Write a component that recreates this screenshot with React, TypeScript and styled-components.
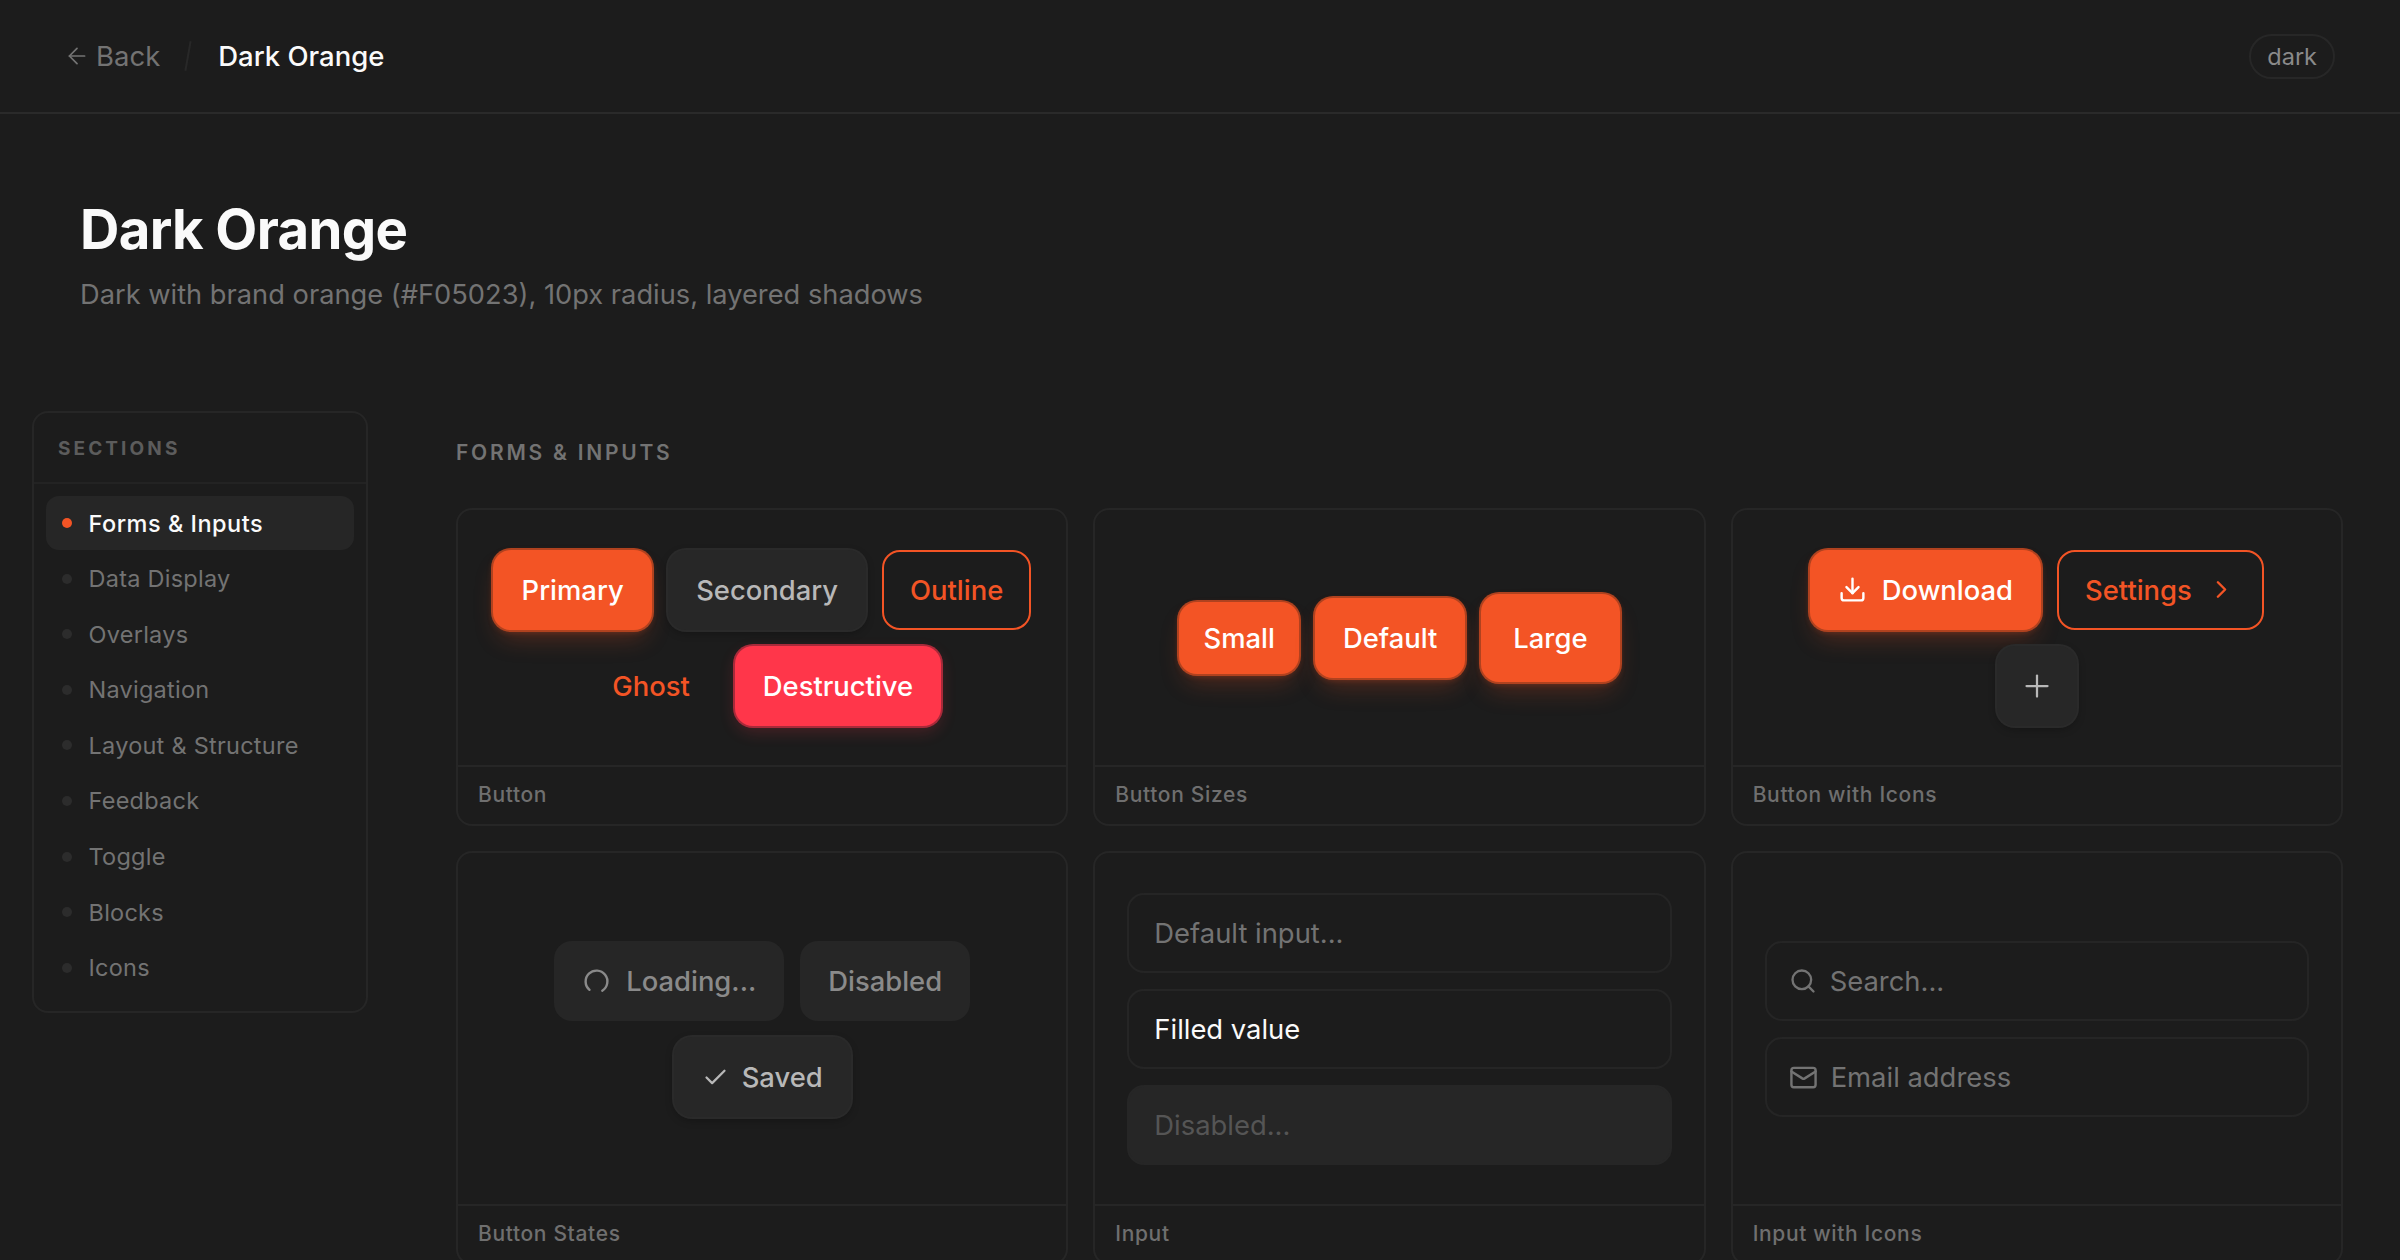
import styled, { createGlobalStyle, css } from "styled-components";
import { ArrowLeft, Check, ChevronRight, Download, LoaderCircle, Mail, Plus, Search } from "lucide-react";

const orange = "#f35425";
const red = "#ff364a";

const GlobalStyle = createGlobalStyle`
  html, body {
    margin: 0;
    height: 100%;
    overflow: hidden;
    background: #1c1c1c;
    color: #fff;
    font-family: Inter, "Liberation Sans", sans-serif;
  }
  * { box-sizing: border-box; }
`;

const TopBar = styled.header`
  display: flex;
  align-items: center;
  justify-content: space-between;
  height: 114px;
  padding: 0 65px 0 64px;
  border-bottom: 2px solid #2a2a2a;
`;

const Crumbs = styled.div`
  display: flex;
  align-items: center;
`;

const BackLink = styled.a`
  display: flex;
  align-items: center;
  gap: 6px;
  font-size: 27.5px;
  color: #737373;
`;

const Slash = styled.span`
  width: 2px;
  height: 30px;
  margin: 0 29px 0 27px;
  background: #282828;
  transform: rotate(10deg);
`;

const CrumbTitle = styled.span`
  font-size: 27.5px;
  font-weight: 500;
  color: #fafafa;
`;

const ThemePill = styled.span`
  display: flex;
  align-items: center;
  height: 45px;
  padding: 0 16px;
  border: 2px solid #272727;
  border-radius: 23px;
  font-size: 23.5px;
  color: #8a8a8a;
`;

const Hero = styled.section`
  padding: 84px 80px 0;
`;

const Title = styled.h1`
  margin: 0;
  font-size: 54.5px;
  line-height: 62px;
  font-weight: 700;
  letter-spacing: -0.012em;
  color: #fafafa;
`;

const Subtitle = styled.p`
  margin: 16px 0 0;
  font-size: 27.25px;
  line-height: 38px;
  color: #737373;
`;

const Columns = styled.div`
  display: flex;
  align-items: flex-start;
  gap: 88px;
  padding: 97px 57px 0 32px;
`;

const Sidebar = styled.nav`
  flex: 0 0 336px;
  border: 2px solid #262626;
  border-radius: 16px;
`;

const SidebarHead = styled.div`
  height: 71px;
  padding: 2px 24px 0;
  display: flex;
  align-items: center;
  border-bottom: 2px solid #232323;
  font-size: 19px;
  font-weight: 700;
  letter-spacing: 3.1px;
  color: #5c5c5c;
`;

const SidebarList = styled.ul`
  display: flex;
  flex-direction: column;
  gap: 1.6px;
  margin: 0;
  padding: 12px 12px 16px;
  list-style: none;
`;

const SidebarItem = styled.li<{ $active?: boolean }>`
  display: flex;
  align-items: center;
  gap: 16.5px;
  height: 54px;
  padding: 0 16px;
  border-radius: 13px;
  font-size: 23.5px;
  letter-spacing: ${(p) => (p.$active ? 0.5 : 0.25)}px;
  font-weight: ${(p) => (p.$active ? 500 : 400)};
  color: ${(p) => (p.$active ? "#fafafa" : "#737373")};
  background: ${(p) => (p.$active ? "#262626" : "transparent")};
`;

const Dot = styled.span<{ $active?: boolean }>`
  width: 10px;
  height: 10px;
  border-radius: 50%;
  background: ${(p) => (p.$active ? orange : "#2c2c2c")};
`;

const Main = styled.main`
  flex: 1;
  min-width: 0;
`;

const SectionTitle = styled.h2`
  margin: 0 0 40px;
  padding-top: 26.5px;
  font-size: 21px;
  line-height: 30px;
  font-weight: 600;
  letter-spacing: 2.75px;
  color: #737373;
`;

const Grid = styled.div`
  display: grid;
  grid-template-columns: repeat(3, 1fr);
  gap: 25.5px 25px;
`;

const Card = styled.article`
  display: flex;
  flex-direction: column;
  border: 2px solid #262626;
  border-radius: 16px;
`;

const CardBody = styled.div`
  flex: 1;
  display: flex;
  flex-wrap: wrap;
  align-items: center;
  align-content: center;
  justify-content: center;
  gap: 16px;
  padding: 40px 32px 39px;
`;

const Stack = styled.div`
  width: 100%;
  display: flex;
  flex-direction: column;
  gap: 16px;
`;

const CardFoot = styled.div`
  height: 59px;
  padding: 0 20px 2px;
  display: flex;
  align-items: center;
  border-top: 2px solid #262626;
  font-size: 21px;
  letter-spacing: 0.65px;
  font-weight: 500;
  color: #6f6f6f;
`;

type Variant = "primary" | "secondary" | "outline" | "ghost" | "danger" | "muted";

const variants: Record<Variant, ReturnType<typeof css>> = {
  primary: css`
    background: ${orange};
    color: #fff;
    box-shadow: 0 0 0 2px #b0421f, 0 14px 24px -6px rgba(240, 80, 35, 0.26), 0 2px 6px rgba(240, 80, 35, 0.3);
  `,
  secondary: css`
    background: #272727;
    color: #b8b8b8;
    box-shadow: 0 0 0 2px #2a2a2a, 0 3px 8px rgba(0, 0, 0, 0.3);
  `,
  outline: css`
    background: transparent;
    color: ${orange};
    border: 2px solid ${orange};
  `,
  ghost: css`
    background: transparent;
    color: ${orange};
  `,
  danger: css`
    background: ${red};
    color: #fff;
    box-shadow: 0 0 0 2px #a82a3a, 0 6px 16px rgba(255, 54, 74, 0.2);
  `,
  muted: css`
    background: #262626;
    color: #8a8a8a;
  `,
};

const Button = styled.button<{ $variant?: Variant; $height?: number; $pad?: number; $gap?: number }>`
  display: inline-flex;
  align-items: center;
  justify-content: center;
  gap: ${(p) => p.$gap ?? 15}px;
  height: ${(p) => p.$height ?? 80}px;
  padding: 0 ${(p) => p.$pad ?? 28}px;
  border: 0;
  border-radius: 18px;
  font-family: inherit;
  font-size: 27.4px;
  font-weight: 500;
  ${(p) => variants[p.$variant ?? "primary"]}
`;

const SquareButton = styled(Button)`
  width: 80px;
  padding: 0;
`;

const Spinner = styled(LoaderCircle)`
  transform: rotate(130deg);
`;

const TextField = styled.input<{ $disabled?: boolean }>`
  display: block;
  width: 100%;
  height: 80px;
  padding: 0 25px;
  border: 2px solid ${(p) => (p.$disabled ? "#262626" : "#252525")};
  border-radius: 17px;
  outline: 0;
  background: ${(p) => (p.$disabled ? "#262626" : "transparent")};
  font-family: inherit;
  font-size: 27.4px;
  color: #fafafa;
  &::placeholder {
    color: ${(p) => (p.$disabled ? "#555" : "#737373")};
    opacity: 1;
  }
`;

const IconField = styled.label`
  display: flex;
  align-items: center;
  gap: 13px;
  height: 80px;
  padding: 0 22px;
  border: 2px solid #252525;
  border-radius: 17px;
  color: #737373;
`;

const BareInput = styled.input`
  flex: 1;
  min-width: 0;
  border: 0;
  outline: 0;
  padding: 0;
  background: transparent;
  font-family: inherit;
  font-size: 27.4px;
  color: #fafafa;
  &::placeholder {
    color: #737373;
    opacity: 1;
  }
`;

const sections = ["Forms & Inputs", "Data Display", "Overlays", "Navigation", "Layout & Structure", "Feedback", "Toggle", "Blocks", "Icons"];

export default function App() {
  return (
    <>
      <GlobalStyle />
      <TopBar>
        <Crumbs>
          <BackLink>
            <ArrowLeft size={26} strokeWidth={1.6} />
            Back
          </BackLink>
          <Slash />
          <CrumbTitle>Dark Orange</CrumbTitle>
        </Crumbs>
        <ThemePill>dark</ThemePill>
      </TopBar>
      <Hero>
        <Title>Dark Orange</Title>
        <Subtitle>Dark with brand orange (#F05023), 10px radius, layered shadows</Subtitle>
      </Hero>
      <Columns>
        <Sidebar>
          <SidebarHead>SECTIONS</SidebarHead>
          <SidebarList>
            {sections.map((name, i) => (
              <SidebarItem key={name} $active={i === 0}>
                <Dot $active={i === 0} />
                {name}
              </SidebarItem>
            ))}
          </SidebarList>
        </Sidebar>
        <Main>
          <SectionTitle>FORMS &amp; INPUTS</SectionTitle>
          <Grid>
            <Card>
              <CardBody>
                <Button $pad={28.5}>Primary</Button>
                <Button $variant="secondary">Secondary</Button>
                <Button $variant="outline" $pad={26}>Outline</Button>
                <Button $variant="ghost" $pad={29}>Ghost</Button>
                <Button $variant="danger">Destructive</Button>
              </CardBody>
              <CardFoot>Button</CardFoot>
            </Card>
            <Card>
              <CardBody>
                <Button $height={72} $pad={24}>Small</Button>
                <Button>Default</Button>
                <Button $height={88} $pad={32}>Large</Button>
              </CardBody>
              <CardFoot>Button Sizes</CardFoot>
            </Card>
            <Card>
              <CardBody>
                <Button>
                  <Download size={29} strokeWidth={2} />
                  Download
                </Button>
                <Button $variant="outline" $pad={26}>
                  Settings
                  <ChevronRight size={29} strokeWidth={2} />
                </Button>
                <SquareButton $variant="secondary">
                  <Plus size={36} strokeWidth={1.5} />
                </SquareButton>
              </CardBody>
              <CardFoot>Button with Icons</CardFoot>
            </Card>
            <Card>
              <CardBody>
                <Button $variant="muted">
                  <Spinner size={29} strokeWidth={2} />
                  Loading...
                </Button>
                <Button $variant="muted">Disabled</Button>
                <Button $variant="secondary" $gap={13}>
                  <Check size={27} strokeWidth={2} />
                  Saved
                </Button>
              </CardBody>
              <CardFoot>Button States</CardFoot>
            </Card>
            <Card>
              <CardBody>
                <Stack>
                  <TextField placeholder="Default input..." readOnly />
                  <TextField defaultValue="Filled value" readOnly />
                  <TextField $disabled placeholder="Disabled..." disabled />
                </Stack>
              </CardBody>
              <CardFoot>Input</CardFoot>
            </Card>
            <Card>
              <CardBody>
                <Stack>
                  <IconField>
                    <Search size={28} strokeWidth={2} />
                    <BareInput placeholder="Search..." readOnly />
                  </IconField>
                  <IconField>
                    <Mail size={29} strokeWidth={2} />
                    <BareInput placeholder="Email address" readOnly />
                  </IconField>
                </Stack>
              </CardBody>
              <CardFoot>Input with Icons</CardFoot>
            </Card>
          </Grid>
        </Main>
      </Columns>
    </>
  );
}
